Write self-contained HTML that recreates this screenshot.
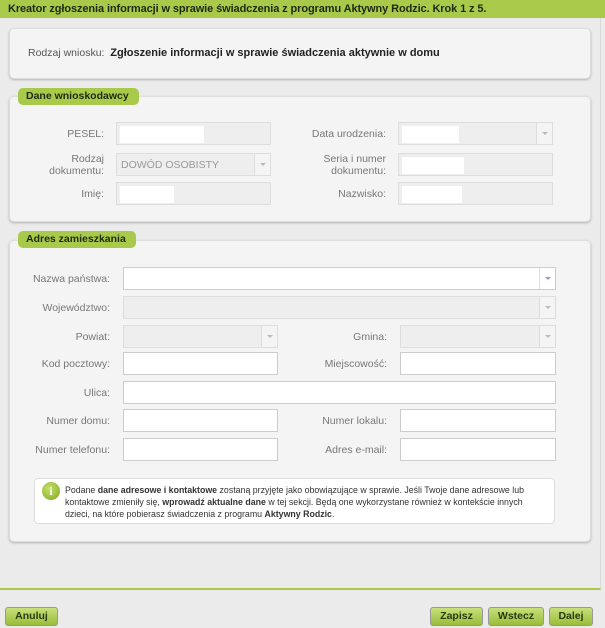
<!DOCTYPE html>
<html><head><meta charset="utf-8"><style>
*{margin:0;padding:0;box-sizing:border-box}
body{width:605px;height:628px;background:#ebebeb;font-family:"Liberation Sans",sans-serif;position:relative;overflow:hidden;color:#333}
.abs{position:absolute}
.hdr{left:0;top:0;width:605px;height:18px;background:#a9c94b;font-weight:bold;font-size:11px;line-height:18px;padding-left:8px;color:#1e2a10;letter-spacing:-0.1px}
.frame{left:0;top:18px;width:601px;height:572px;border-right:1px solid #d8d8d8;border-bottom:2px solid #a9c94b}
.panel{background:#f4f4f4;border:1px solid #ddd;border-radius:5px;box-shadow:0 1px 2px rgba(0,0,0,.25)}
.leg{background:#a9c94b;border-radius:5px;font-weight:bold;font-size:10.5px;line-height:17px;height:17px;padding-left:8px;color:#1e2a10}
.lbl{font-size:10.5px;color:#777;text-align:right;line-height:12px}
.in{height:23px;border:1px solid #ccc;background:#fff}
.dis{background:#eee;border:1px solid #ddd}
.wb{position:absolute;left:3px;top:3px;height:17px;background:#fff}
.arr{position:absolute;right:0;top:0;width:16px;height:21px;border-left:1px solid #ddd;background:#f4f4f4}
.arr:after{content:"";position:absolute;left:5px;top:9px;border-left:3px solid transparent;border-right:3px solid transparent;border-top:3px solid #bbb}
.arr.blue:after{border-top-color:#8aa0c8}
.btn{top:607px;height:19px;border:1px solid #999;border-radius:3px;background:linear-gradient(#c8e07a,#98bd3a);font-weight:bold;font-size:10.5px;line-height:17px;text-align:center;color:#2a3a10}
</style></head><body>
<div class="abs hdr">Kreator zgłoszenia informacji w sprawie świadczenia z programu Aktywny Rodzic. Krok 1 z 5.</div>
<div class="abs frame"></div>

<div class="abs panel" style="left:9px;top:28px;width:582px;height:51px"></div>
<div class="abs" style="left:28px;top:47px;font-size:10.5px;color:#555">Rodzaj wniosku:&nbsp; <b style="color:#222;font-size:11px">Zgłoszenie informacji w sprawie świadczenia aktywnie w domu</b></div>

<div class="abs panel" style="left:9px;top:96px;width:582px;height:126px"></div>
<div class="abs leg" style="left:18px;top:88px;width:121px">Dane wnioskodawcy</div>
<div class="abs lbl" style="left:20px;top:128px;width:84px">PESEL:</div>
<div class="abs in dis" style="left:116px;top:122px;width:155px"><div class="wb" style="width:84px"></div></div>
<div class="abs lbl" style="left:20px;top:153px;width:84px">Rodzaj<br>dokumentu:</div>
<div class="abs in dis" style="left:116px;top:153px;width:155px"><span class="abs" style="left:4px;top:5px;font-size:10.5px;color:#999">DOWÓD OSOBISTY</span><div class="arr"></div></div>
<div class="abs lbl" style="left:20px;top:188px;width:84px">Imię:</div>
<div class="abs in dis" style="left:116px;top:182px;width:155px"><div class="wb" style="width:54px"></div></div>
<div class="abs lbl" style="left:280px;top:128px;width:106px">Data urodzenia:</div>
<div class="abs in dis" style="left:398px;top:122px;width:155px"><div class="wb" style="width:57px"></div><div class="arr"></div></div>
<div class="abs lbl" style="left:280px;top:153px;width:106px">Seria i numer<br>dokumentu:</div>
<div class="abs in dis" style="left:398px;top:153px;width:155px"><div class="wb" style="width:62px"></div></div>
<div class="abs lbl" style="left:280px;top:188px;width:106px">Nazwisko:</div>
<div class="abs in dis" style="left:398px;top:182px;width:155px"><div class="wb" style="width:60px"></div></div>

<div class="abs panel" style="left:9px;top:240px;width:582px;height:302px"></div>
<div class="abs leg" style="left:18px;top:231px;width:118px">Adres zamieszkania</div>
<div class="abs lbl" style="left:10px;top:273px;width:100px">Nazwa państwa:</div>
<div class="abs in" style="left:123px;top:267px;width:433px"><div class="arr blue" style="background:#fff"></div></div>
<div class="abs lbl" style="left:10px;top:302px;width:100px">Województwo:</div>
<div class="abs in dis" style="left:123px;top:296px;width:433px"><div class="arr"></div></div>
<div class="abs lbl" style="left:10px;top:331px;width:100px">Powiat:</div>
<div class="abs in dis" style="left:123px;top:325px;width:155px"><div class="arr"></div></div>
<div class="abs lbl" style="left:290px;top:331px;width:97px">Gmina:</div>
<div class="abs in dis" style="left:400px;top:325px;width:156px"><div class="arr"></div></div>
<div class="abs lbl" style="left:10px;top:358px;width:100px">Kod pocztowy:</div>
<div class="abs in" style="left:123px;top:352px;width:155px"></div>
<div class="abs lbl" style="left:290px;top:358px;width:97px">Miejscowość:</div>
<div class="abs in" style="left:400px;top:352px;width:156px"></div>
<div class="abs lbl" style="left:10px;top:387px;width:100px">Ulica:</div>
<div class="abs in" style="left:123px;top:381px;width:433px"></div>
<div class="abs lbl" style="left:10px;top:415px;width:100px">Numer domu:</div>
<div class="abs in" style="left:123px;top:409px;width:155px"></div>
<div class="abs lbl" style="left:290px;top:415px;width:97px">Numer lokalu:</div>
<div class="abs in" style="left:400px;top:409px;width:156px"></div>
<div class="abs lbl" style="left:10px;top:444px;width:100px">Numer telefonu:</div>
<div class="abs in" style="left:123px;top:438px;width:155px"></div>
<div class="abs lbl" style="left:290px;top:444px;width:97px">Adres e-mail:</div>
<div class="abs in" style="left:400px;top:438px;width:156px"></div>

<div class="abs" style="left:34px;top:478px;width:521px;height:46px;background:#fff;border:1px solid #ddd;border-radius:4px"></div>
<div class="abs" style="left:42px;top:482px;width:18px;height:18px;border-radius:50%;background:radial-gradient(circle at 40% 35%,#c6e06a,#7fa820);color:#fff;font-weight:bold;font-size:12px;line-height:18px;text-align:center;font-family:'Liberation Serif',serif">i</div>
<div class="abs" style="left:65px;top:484px;width:480px;font-size:8.8px;line-height:12px;color:#333">Podane <b>dane adresowe i kontaktowe</b> zostaną przyjęte jako obowiązujące w sprawie. Jeśli Twoje dane adresowe lub kontaktowe zmieniły się, <b>wprowadź aktualne dane</b> w tej sekcji. Będą one wykorzystane również w kontekście innych dzieci, na które pobierasz świadczenia z programu <b>Aktywny Rodzic</b>.</div>

<div class="abs btn" style="left:5px;width:53px">Anuluj</div>
<div class="abs btn" style="left:430px;width:53px">Zapisz</div>
<div class="abs btn" style="left:488px;width:56px">Wstecz</div>
<div class="abs btn" style="left:549px;width:44px">Dalej</div>
</body></html>
